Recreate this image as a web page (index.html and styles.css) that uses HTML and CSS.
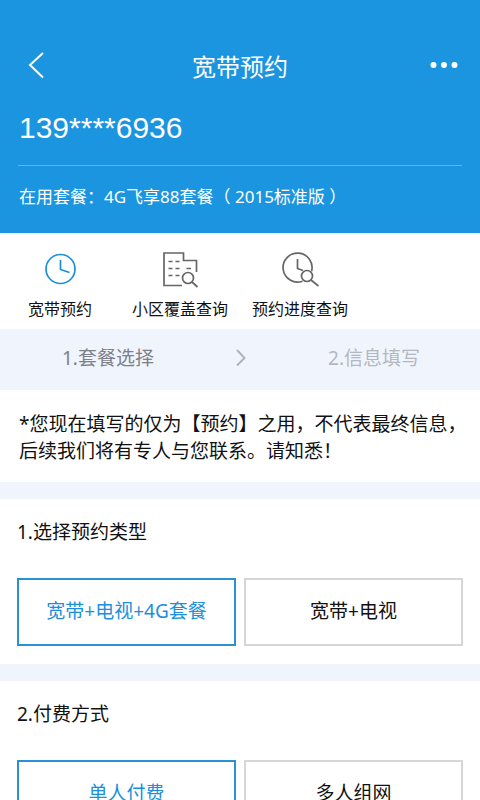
FILE: index.html
```html
<!DOCTYPE html>
<html lang="zh-CN">
<head>
    <meta charset="UTF-8">
    <meta name="viewport" content="width=device-width, initial-scale=1">
    <title>宽带预约</title>
    <link rel="stylesheet" href="styles.css">
</head>
<body>

    <header class="header">
        <div class="navbar">
            <button class="nav-button" aria-label="返回">
                <svg width="16" height="28" viewBox="0 0 16 28"><path d="M15 2L2 14L15 26.5" fill="none" stroke="#fff" stroke-width="2"/></svg>
            </button>
            <h1 class="title">宽带预约</h1>
            <button class="nav-button" aria-label="更多">
                <svg width="28" height="8" viewBox="0 0 28 8" fill="#fff"><circle cx="3.5" cy="4" r="3"/><circle cx="14" cy="4" r="3"/><circle cx="24.5" cy="4" r="3"/></svg>
            </button>
        </div>
        <div class="phone">139****6936</div>
        <div class="package">在用套餐：4G飞享88套餐（ 2015标准版 ）</div>
    </header>

    <nav class="tabs">
        <a class="tab active" href="#">
            <svg width="40" height="40" viewBox="0 0 40 40"><circle cx="20.5" cy="20" r="14.5"/><path d="M20.5 11V20.5L29.5 23.5"/></svg>
            <span>宽带预约</span>
        </a>
        <a class="tab" href="#">
            <svg width="40" height="40" viewBox="0 0 40 40">
                <path d="M22 36.5H4V4H23.5V11.5H36.5V23M23.5 11.5V12"/>
                <path d="M8.5 12.5H12.5M15.5 12.5H19.5M8.5 19.5H12.5M15.5 19.5H19.5M26.5 19.5H31M8.5 26.5H12.5M15.5 26.5H19.5"/>
                <circle cx="28" cy="29" r="5.5"/><path d="M32 33L37.5 38"/>
            </svg>
            <span>小区覆盖查询</span>
        </a>
        <a class="tab" href="#">
            <svg width="40" height="40" viewBox="0 0 40 40">
                <path d="M22.5 32.2A14.5 14.5 0 1 1 31.6 22.2M17.5 10V19.5L23 21.5"/>
                <circle cx="27" cy="27" r="5.5"/><path d="M31 31L38.5 37"/>
            </svg>
            <span>预约进度查询</span>
        </a>
    </nav>

    <div class="steps">
        <span class="step current">1.套餐选择</span>
        <svg width="10" height="18" viewBox="0 0 10 18"><path d="M1 2L8.5 10L1 17.5" fill="none" stroke="#b0b3ba" stroke-width="2"/></svg>
        <span class="step">2.信息填写</span>
    </div>

    <p class="notice">*您现在填写的仅为【预约】之用，不代表最终信息，<br>后续我们将有专人与您联系。请知悉！</p>

    <section class="section">
        <h2>1.选择预约类型</h2>
        <div class="options">
            <button class="option selected">宽带+电视+4G套餐</button>
            <button class="option">宽带+电视</button>
        </div>
    </section>

    <section class="section">
        <h2>2.付费方式</h2>
        <div class="options">
            <button class="option selected">单人付费</button>
            <button class="option">多人组网</button>
        </div>
    </section>

</body>
</html>
```

FILE: styles.css
```css
* {
    box-sizing: border-box;
}
body {
    margin: 0;
    background-color: #f0f5fd;
    color: #111111;
    font-family: "Noto Sans", "Noto Sans CJK SC", sans-serif;
    font-size: 19px;
}
button {
    font-family: inherit;
    cursor: pointer;
}
.header {
    background-color: #1b95df;
    color: #ffffff;
    padding: 40px 18px 0;
}
.navbar {
    display: flex;
    align-items: center;
    justify-content: space-between;
    height: 50px;
}
.nav-button {
    display: flex;
    align-items: center;
    justify-content: center;
    width: 36px;
    height: 44px;
    padding: 0;
    border: none;
    background: none;
}
.title {
    margin: 0;
    font-size: 24px;
    font-weight: normal;
}
.phone {
    padding: 16px 1px 16px;
    border-bottom: 1px solid #62b5e9;
    font-family: "Liberation Sans", Arial, sans-serif;
    font-size: 30px;
    line-height: 43px;
}
.package {
    padding-left: 1px;
    font-size: 17px;
    line-height: 62px;
    height: 67px;
}
.tabs {
    display: grid;
    grid-template-columns: repeat(4, 1fr);
    background-color: #ffffff;
    height: 96px;
    padding-top: 16px;
}
.tab {
    display: flex;
    flex-direction: column;
    align-items: center;
    gap: 8px;
    color: #111111;
    font-size: 16px;
    line-height: 24px;
    text-decoration: none;
    white-space: nowrap;
}
.tab svg {
    fill: none;
    stroke: #666666;
    stroke-width: 1.7;
}
.tab.active svg {
    stroke: #1b8fdc;
}
.steps {
    display: flex;
    align-items: center;
    justify-content: space-between;
    height: 61px;
    padding: 0 60px 5px 62px;
}
.step {
    color: #b3b7c0;
}
.step.current {
    color: #7c808a;
}
.notice {
    margin: 0;
    padding: 21px 0 17px 19px;
    background-color: #ffffff;
    line-height: 27px;
}
.section {
    margin-top: 17px;
    padding: 19px 17px 18px;
    background-color: #ffffff;
}
.section h2 {
    margin: 0 0 32px;
    font-size: 19px;
    font-weight: normal;
    line-height: 28px;
}
.options {
    display: grid;
    grid-template-columns: 1fr 1fr;
    gap: 8px;
}
.option {
    height: 68px;
    padding: 0 0 4px;
    border: 2px solid #d6d6d6;
    background-color: #ffffff;
    color: #111111;
    font-size: 19px;
}
.option.selected {
    border-color: #2b91d5;
    color: #1b8fdc;
}
```
